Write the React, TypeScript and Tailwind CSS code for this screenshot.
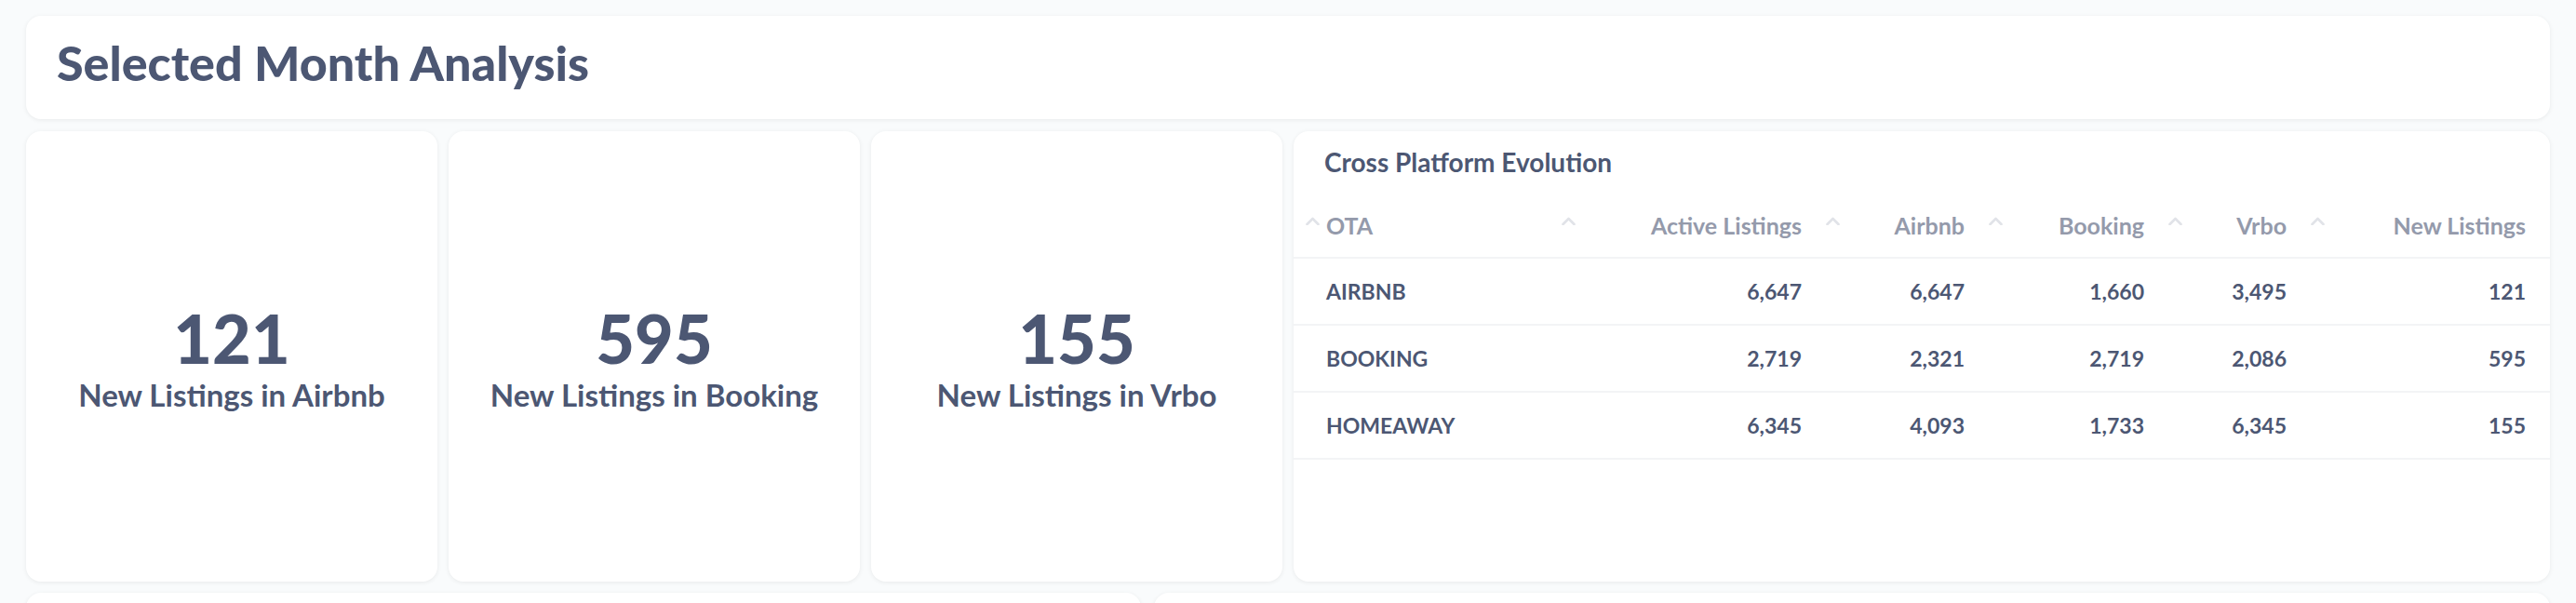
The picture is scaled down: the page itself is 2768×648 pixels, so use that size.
import React from "react";

const stats = [
  { value: "121", label: "New Listings in Airbnb" },
  { value: "595", label: "New Listings in Booking" },
  { value: "155", label: "New Listings in Vrbo" },
];

const columns = ["OTA", "Active Listings", "Airbnb", "Booking", "Vrbo", "New Listings"];

const rows = [
  ["AIRBNB", "6,647", "6,647", "1,660", "3,495", "121"],
  ["BOOKING", "2,719", "2,321", "2,719", "2,086", "595"],
  ["HOMEAWAY", "6,345", "4,093", "1,733", "6,345", "155"],
];

const gridCols = "grid grid-cols-[288px_284px_175px_193px_153px_1fr]";

function Caret() {
  return (
    <svg width="15" height="9" viewBox="0 0 15 9" className="mb-[9px] shrink-0">
      <polyline
        points="1.5,8 7.5,2 13.5,8"
        fill="none"
        stroke="#e1e3e8"
        strokeWidth="2.6"
        strokeLinecap="round"
        strokeLinejoin="round"
      />
    </svg>
  );
}

function StatCard({ value, label }: { value: string; label: string }) {
  return (
    <div className="flex h-[484px] flex-col items-center justify-center rounded-2xl bg-white pt-[4px] shadow-[0_1px_5px_rgba(0,0,0,0.07)]">
      <div className="text-[72px] leading-none font-black text-[#4c5773]">{value}</div>
      <div className="mt-[6px] text-[33px] leading-[38px] font-bold text-[#4c5773]">{label}</div>
    </div>
  );
}

function CrossPlatformTable() {
  return (
    <div className="h-[484px] overflow-hidden rounded-2xl bg-white shadow-[0_1px_5px_rgba(0,0,0,0.07)]">
      <div className="h-[65px] pt-[17px] pl-[33px]">
        <h2 className="text-[28px] leading-[32px] font-bold text-[#4c5773]">Cross Platform Evolution</h2>
      </div>
      <div className={`${gridCols} h-[72px] border-b-2 border-[#f3f4f6]`}>
        {columns.map((col, i) => (
          <div
            key={col}
            className={
              i === 0
                ? "flex items-center pl-[13px] text-[25px] leading-[72px] font-bold text-[#949aab]"
                : "flex items-center justify-between pr-[26px] text-[25px] leading-[72px] font-bold text-[#949aab]"
            }
          >
            <Caret />
            <span className={i === 0 ? "ml-[7px]" : ""}>{col}</span>
          </div>
        ))}
      </div>
      {rows.map((row) => (
        <div key={row[0]} className={`${gridCols} h-[72px] border-b-2 border-[#f3f4f6]`}>
          {row.map((cell, i) => (
            <div
              key={i}
              className={
                i === 0
                  ? "pl-[35px] text-[23px] leading-[70px] font-bold text-[#4c5773]"
                  : "pr-[26px] text-right text-[23px] leading-[70px] font-bold text-[#4c5773]"
              }
            >
              {cell}
            </div>
          ))}
        </div>
      ))}
    </div>
  );
}

export default function App() {
  return (
    <div className="min-h-screen bg-[#f9fbfc] px-[28px] pt-[17px] [font-family:Lato,'Open_Sans',sans-serif]">
      <div className="h-[111px] rounded-2xl bg-white pt-[24px] pl-[33px] shadow-[0_1px_5px_rgba(0,0,0,0.07)]">
        <h1 className="text-[52px] leading-none font-black text-[#4c5773]">Selected Month Analysis</h1>
      </div>
      <div className="mt-[13px] grid grid-cols-[442px_442px_442px_1fr] gap-[12px]">
        {stats.map((s) => (
          <StatCard key={s.value} value={s.value} label={s.label} />
        ))}
        <CrossPlatformTable />
      </div>
      <div className="mt-[12px] grid grid-cols-[1198px_1fr] gap-[14px]">
        <div className="h-[300px] rounded-2xl bg-white shadow-[0_1px_5px_rgba(0,0,0,0.07)]" />
        <div className="h-[300px] rounded-2xl bg-white shadow-[0_1px_5px_rgba(0,0,0,0.07)]" />
      </div>
    </div>
  );
}
